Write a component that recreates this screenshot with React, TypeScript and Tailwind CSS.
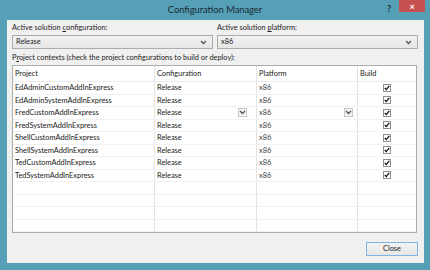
import React from "react";

const FONT = { fontFamily: 'Lato, "Noto Sans", Arial, sans-serif' };

const projects = [
  "EdAdminCustomAddInExpress",
  "EdAdminSystemAddInExpress",
  "FredCustomAddInExpress",
  "FredSystemAddInExpress",
  "ShellCustomAddInExpress",
  "ShellSystemAddInExpress",
  "TedCustomAddInExpress",
  "TedSystemAddInExpress",
];

function Chevron({ className = "" }: { className?: string }) {
  return (
    <svg width="7" height="5" viewBox="0 0 7 5" className={className} aria-hidden="true">
      <path d="M1 1 L3.5 3.5 L6 1" fill="none" stroke="#555" strokeWidth="1.3" />
    </svg>
  );
}

function Combo({ value }: { value: string }) {
  return (
    <div className="h-[14px] border border-[#acacac] bg-gradient-to-b from-[#f2f2f2] to-[#e6e6e6] flex items-center justify-between pl-[3px] pr-[5px]">
      <span className="text-[7.4px] leading-none text-[#222]">{value}</span>
      <Chevron />
    </div>
  );
}

function CellArrow() {
  return (
    <div className="w-[9px] h-[9px] border border-[#c8c8c8] bg-[#f4f4f4] flex items-center justify-center">
      <Chevron />
    </div>
  );
}

function Check() {
  return (
    <div className="w-[8px] h-[8px] border border-[#8f8f8f] bg-white flex items-center justify-center">
      <svg width="6" height="6" viewBox="0 0 6 6" aria-hidden="true">
        <path d="M0.8 3 L2.3 4.6 L5.3 0.9" fill="none" stroke="#111" strokeWidth="1.3" />
      </svg>
    </div>
  );
}

// Access-key underline helper
function Label({ before, key_, after }: { before: string; key_: string; after: string }) {
  return (
    <div className="h-[12px] text-[7.4px] leading-[12px] text-[#222]">
      {before}
      <span className="underline underline-offset-1">{key_}</span>
      {after}
    </div>
  );
}

export default function App() {
  const emptyRows = 4;
  return (
    <div className="w-[430px] h-[270px] bg-[#559fb7] flex flex-col overflow-hidden" style={FONT}>
      {/* Title bar */}
      <div className="relative h-[20px] flex items-center justify-center">
        <span className="text-[9.3px] text-[#1c2a33]">Configuration Manager</span>
        <span className="absolute left-[387px] top-[2px] text-[9px] font-bold text-[#1c2a33]">?</span>
        <div className="absolute left-[399px] top-0 w-[26px] h-[12px] bg-[#c75050] flex items-center justify-center">
          <span className="text-[9px] leading-none font-bold text-white">×</span>
        </div>
      </div>

      {/* Client area */}
      <div className="flex-1 ml-[7px] mr-[6px] mb-[7px] bg-[#f0f0f0] pl-[5px] pr-[6px] pt-[2px] flex flex-col">
        <div className="grid grid-cols-[201px_201px] gap-[4px]">
          <div className="flex flex-col gap-[1px]">
            <Label before="Active solution " key_="c" after="onfiguration:" />
            <Combo value="Release" />
          </div>
          <div className="flex flex-col gap-[1px]">
            <Label before="Active solution " key_="p" after="latform:" />
            <Combo value="x86" />
          </div>
        </div>

        <div className="mt-[3px]">
          <Label before="P" key_="r" after="oject contexts (check the project configurations to build or deploy):" />
        </div>

        <div className="mt-[1px] w-[405px] h-[168px] border border-[#adadad] bg-white overflow-hidden text-[7.4px] text-[#222]">
          <div className="flex h-[16px] items-center border-b border-[#ececec]">
            <div className="w-[142px] h-full pl-[2px] flex items-center border-r border-[#e2e2e2]">Project</div>
            <div className="w-[102px] h-full pl-[2px] flex items-center border-r border-[#e2e2e2]">Configuration</div>
            <div className="w-[101px] h-full pl-[2px] flex items-center border-r border-[#e2e2e2]">Platform</div>
            <div className="flex-1 h-full pl-[2px] flex items-center">Build</div>
          </div>
          {projects.map((p, i) => (
            <div key={p} className="flex h-[12.5px] items-center border-b border-[#f1f1f1]">
              <div className="w-[142px] h-full pl-[2px] flex items-center border-r border-[#e2e2e2]">{p}</div>
              <div className="w-[102px] h-full pl-[2px] pr-[9px] flex items-center justify-between border-r border-[#e2e2e2]">
                <span>Release</span>
                {i === 2 && <CellArrow />}
              </div>
              <div className="w-[101px] h-full pl-[2px] pr-[4px] flex items-center justify-between border-r border-[#e2e2e2]">
                <span className="text-[#444]">x86</span>
                {i === 2 && <CellArrow />}
              </div>
              <div className="flex-1 h-full flex items-center justify-center">
                <Check />
              </div>
            </div>
          ))}
          {Array.from({ length: emptyRows }).map((_, i) => (
            <div key={i} className="flex h-[12.5px] border-b border-[#f1f1f1]">
              <div className="w-[142px] h-full border-r border-[#e2e2e2]" />
              <div className="w-[102px] h-full border-r border-[#e2e2e2]" />
              <div className="w-[101px] h-full border-r border-[#e2e2e2]" />
              <div className="flex-1 h-full" />
            </div>
          ))}
        </div>

        <div className="flex justify-end mt-[9px]">
          <button className="w-[52px] h-[14px] border border-[#7eb4ea] bg-gradient-to-b from-[#f3f3f3] to-[#e7e7e7] text-[7.4px] leading-none text-[#222] flex items-center justify-center">
            Close
          </button>
        </div>
      </div>
    </div>
  );
}
